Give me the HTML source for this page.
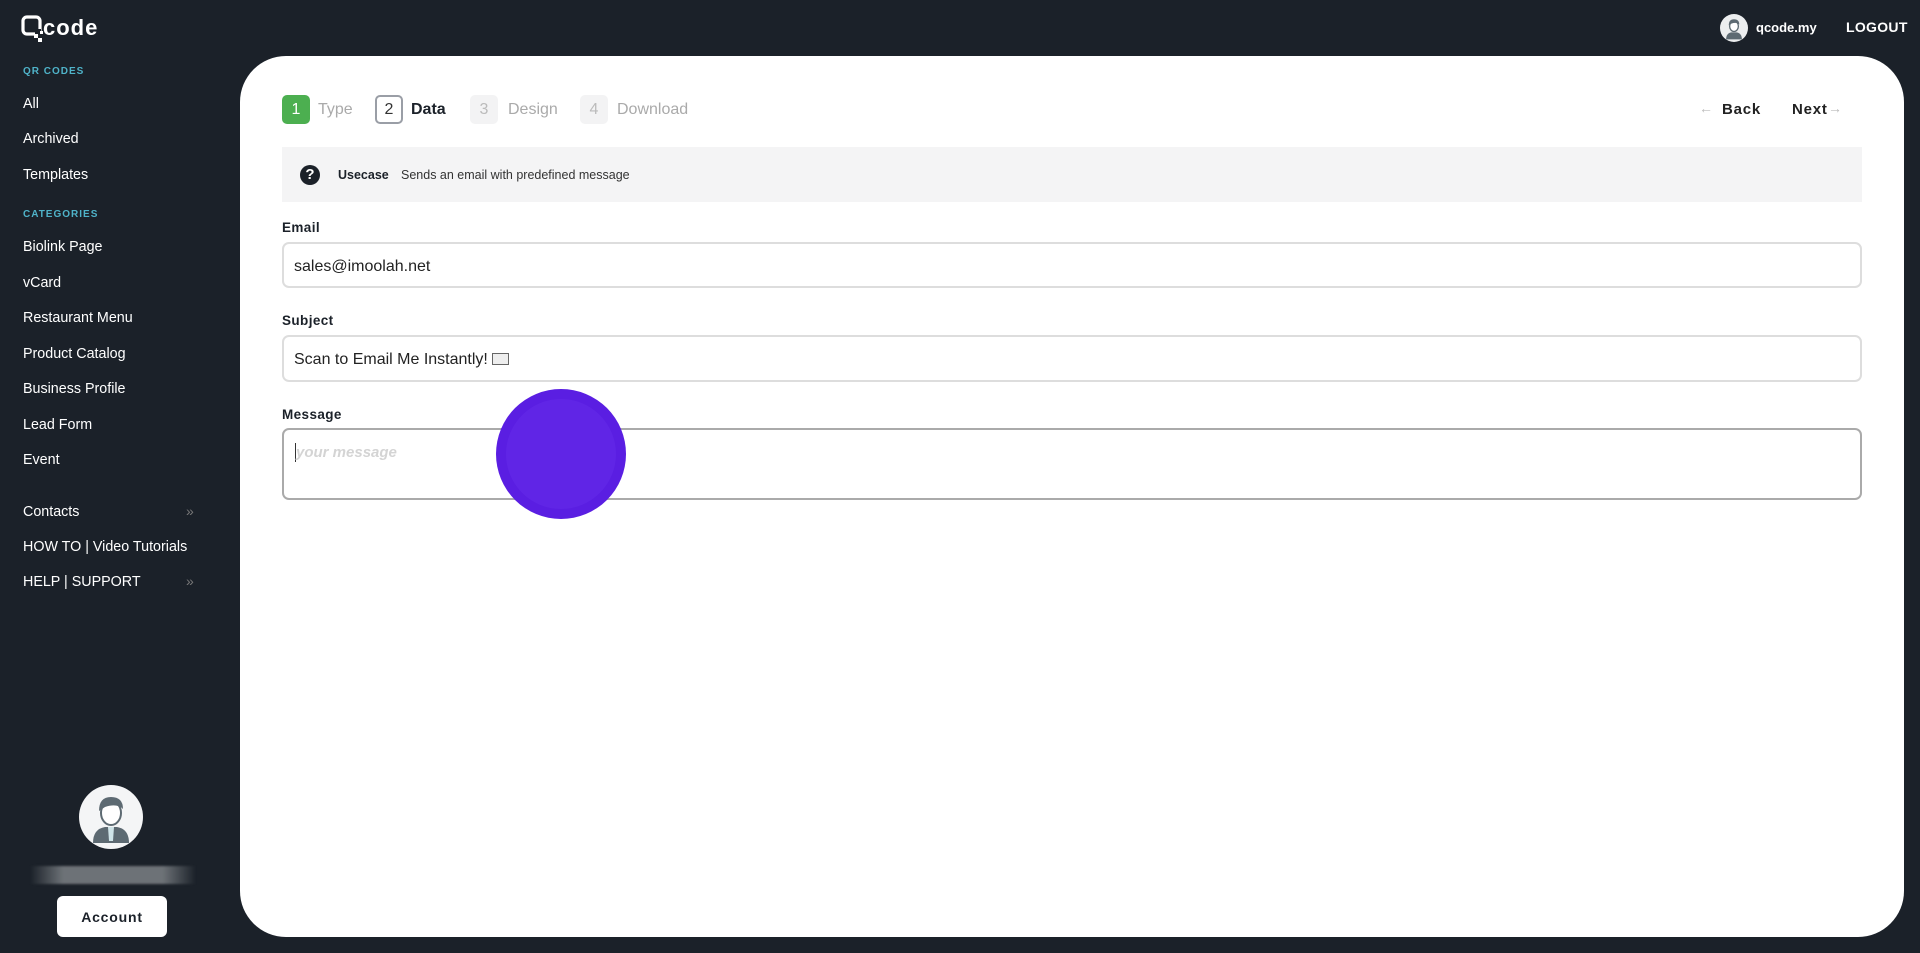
<!DOCTYPE html>
<html><head><meta charset="utf-8"><style>
*{box-sizing:border-box;margin:0;padding:0}
body{width:1920px;height:953px;background:#1b2129;font-family:"Liberation Sans",sans-serif;position:relative;overflow:hidden}
.a{position:absolute}
.side{color:#fff;font-size:14.3px;left:23px;margin-top:2px}
.sec{color:#4fb3c9;font-size:10px;font-weight:bold;letter-spacing:1px;left:23px;margin-top:2px}
.card{left:240px;top:56px;width:1664px;height:881px;background:#fff;border-radius:46px}
.step{font-size:16px;color:#aaa;margin-top:1px}
.box{width:28px;height:29px;border-radius:5px;display:flex;align-items:center;justify-content:center;font-size:16px;margin-top:1px}
.lbl{font-size:13.5px;font-weight:bold;color:#1b2129;left:282px;letter-spacing:.4px;margin-top:2px}
.inp{left:282px;width:1580px;border:2px solid #ddd;border-radius:7px;background:#fff}
.val{font-size:16px;color:#222;left:294px;margin-top:1px}
.chev{color:#777;font-size:14px;left:186px;margin-top:2px}
</style></head><body>
<svg class="a" style="left:20px;top:14px" width="82" height="28" viewBox="0 0 82 28">
<rect x="3" y="3" width="17" height="17" rx="4" fill="none" stroke="#fff" stroke-width="3.2"/>
<rect x="15" y="15" width="6" height="6" fill="#1b2129"/>
<rect x="14" y="20" width="4" height="4" fill="#fff"/><rect x="18" y="24" width="4" height="4" fill="#fff"/><rect x="20" y="17" width="3" height="3" fill="#fff"/>
<text x="23" y="21" fill="#fff" font-family="Liberation Sans" font-size="22" font-weight="bold" letter-spacing="1">code</text>
</svg>
<div class="a sec" style="top:64px">QR CODES</div>
<div class="a side" style="top:94px">All</div>
<div class="a side" style="top:129px">Archived</div>
<div class="a side" style="top:165px">Templates</div>
<div class="a sec" style="top:207px">CATEGORIES</div>
<div class="a side" style="top:237px">Biolink Page</div>
<div class="a side" style="top:273px">vCard</div>
<div class="a side" style="top:308px">Restaurant Menu</div>
<div class="a side" style="top:344px">Product Catalog</div>
<div class="a side" style="top:379px">Business Profile</div>
<div class="a side" style="top:415px">Lead Form</div>
<div class="a side" style="top:450px">Event</div>
<div class="a side" style="top:502px">Contacts</div>
<div class="a side" style="top:537px">HOW TO | Video Tutorials</div>
<div class="a side" style="top:572px">HELP | SUPPORT</div>
<div class="a chev" style="top:501px">»</div>
<div class="a chev" style="top:571px">»</div>
<svg class="a" style="left:79px;top:785px" width="64" height="64" viewBox="0 0 64 64">
<circle cx="32" cy="32" r="32" fill="#f4f5f6"/>
<path d="M14 58 Q14 44 26 42 L38 42 Q50 44 50 58 Z" fill="#5d6a72"/>
<path d="M29 42 L35 42 L34 56 L30 56Z" fill="#cfe4e8"/>
<ellipse cx="32" cy="28" rx="10" ry="12" fill="#fff" stroke="#5d6a72" stroke-width="2"/>
<path d="M20 26 Q20 12 32 12 Q44 12 44 24 Q38 18 26 22 Z" fill="#5d6a72"/>
</svg>
<div class="a" style="left:30px;top:866px;width:166px;height:18px;background:linear-gradient(90deg,rgba(120,125,130,0),#6d7277 20%,#6d7277 80%,rgba(120,125,130,0));filter:blur(1px)"></div>
<div class="a" style="left:57px;top:896px;width:110px;height:41px;background:#fff;border-radius:6px;font-size:14px;font-weight:bold;color:#1b2129;display:flex;align-items:center;justify-content:center;letter-spacing:.8px">Account</div>
<svg class="a" style="left:1720px;top:14px" width="28" height="28" viewBox="0 0 64 64"><circle cx="32" cy="32" r="32" fill="#eceeef"/><path d="M14 58 Q14 44 26 42 L38 42 Q50 44 50 58 Z" fill="#5d6a72"/><ellipse cx="32" cy="28" rx="10" ry="12" fill="#fff" stroke="#5d6a72" stroke-width="3"/><path d="M20 26 Q20 12 32 12 Q44 12 44 24 Q38 18 26 22 Z" fill="#5d6a72"/></svg>
<div class="a" style="left:1756px;top:20px;color:#fff;font-size:13px;font-weight:bold">qcode.my</div>
<div class="a" style="left:1846px;top:19px;color:#fff;font-size:14px;font-weight:bold;letter-spacing:.3px">LOGOUT</div>
<div class="a card"></div>
<div class="a box" style="left:282px;top:94px;background:#4caf50;color:#fff">1</div>
<div class="a step" style="left:318px;top:100px">Type</div>
<div class="a box" style="left:375px;top:94px;border:2px solid #9a9ea6;color:#333">2</div>
<div class="a step" style="left:411px;top:100px;color:#1b2129;font-weight:bold">Data</div>
<div class="a box" style="left:470px;top:94px;background:#f3f3f4;color:#bbb">3</div>
<div class="a step" style="left:508px;top:100px">Design</div>
<div class="a box" style="left:580px;top:94px;background:#f3f3f4;color:#bbb">4</div>
<div class="a step" style="left:617px;top:100px">Download</div>
<div class="a" style="left:1699px;top:100px;color:#bbb;font-size:14px">←</div>
<div class="a" style="left:1722px;top:101px;color:#222;font-size:15px;font-weight:bold;letter-spacing:.8px">Back</div>
<div class="a" style="left:1792px;top:101px;color:#222;font-size:15px;font-weight:bold;letter-spacing:.8px">Next</div>
<div class="a" style="left:1828px;top:100px;color:#bbb;font-size:14px">→</div>
<div class="a" style="left:282px;top:147px;width:1580px;height:55px;background:#f4f4f5"></div>
<div class="a" style="left:300px;top:165px;width:20px;height:20px;border-radius:50%;background:#1b2129;color:#fff;font-size:15px;font-weight:bold;text-align:center;line-height:20px">?</div>
<div class="a" style="left:338px;top:168px;font-size:12.5px;font-weight:bold;color:#1b2129">Usecase</div>
<div class="a" style="left:401px;top:168px;font-size:12.5px;color:#333">Sends an email with predefined message</div>
<div class="a lbl" style="top:218px">Email</div>
<div class="a inp" style="top:242px;height:46px"></div>
<div class="a val" style="top:257px">sales@imoolah.net</div>
<div class="a lbl" style="top:311px">Subject</div>
<div class="a inp" style="top:335px;height:47px"></div>
<div class="a val" style="top:350px">Scan to Email Me Instantly! <span style="display:inline-block;width:17px;height:12px;border:1px solid #666;background:#eee;vertical-align:-1px"></span></div>
<div class="a lbl" style="top:405px">Message</div>
<div class="a inp" style="top:428px;height:72px;border-color:#aaa"></div>
<div class="a" style="left:295px;top:443px;width:1px;height:19px;background:#333"></div>
<div class="a" style="left:296px;top:444px;font-size:15px;font-style:italic;font-weight:bold;color:#d4d4d4">your message</div>
<div class="a" style="left:496px;top:389px;width:130px;height:130px;border-radius:50%;background:#5a1ee2"></div>
<div class="a" style="left:506px;top:399px;width:110px;height:110px;border-radius:50%;background:#6025e6"></div>
</body></html>
